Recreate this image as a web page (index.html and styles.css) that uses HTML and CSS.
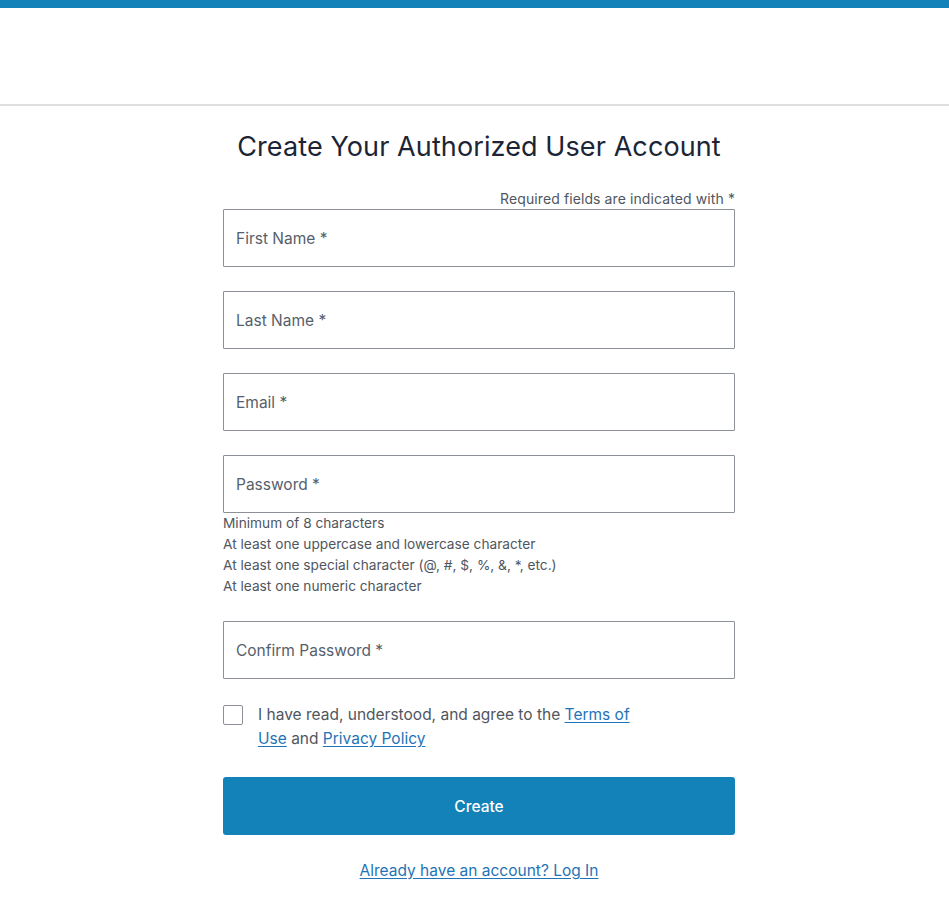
FILE: index.html
```html
<!DOCTYPE html>
<html lang="en">
<head>
<meta charset="utf-8">
<title>Create Your Authorized User Account</title>
<link rel="stylesheet" href="styles.css">
</head>
<body>
<div class="topbar"></div>
<header class="header"></header>
<main class="main">
  <form class="form">
    <h1 class="title">Create Your Authorized User Account</h1>
    <p class="required">Required fields are indicated with *</p>
    <div class="field"><input class="input" type="text" placeholder="First Name *"></div>
    <div class="field"><input class="input" type="text" placeholder="Last Name *"></div>
    <div class="field"><input class="input" type="email" placeholder="Email *"></div>
    <div class="field">
      <input class="input" type="password" placeholder="Password *">
      <ul class="hints">
        <li>Minimum of 8 characters</li>
        <li>At least one uppercase and lowercase character</li>
        <li>At least one special character (@, #, $, %, &amp;, *, etc.)</li>
        <li>At least one numeric character</li>
      </ul>
    </div>
    <div class="field"><input class="input" type="password" placeholder="Confirm Password *"></div>
    <label class="agree">
      <span class="box"></span>
      <span class="agree-text">I have read, understood, and agree to the <a href="#" class="link">Terms of Use</a> and <a href="#" class="link">Privacy Policy</a></span>
    </label>
    <button type="button" class="btn">Create</button>
    <div class="login"><a href="#" class="link">Already have an account? Log In</a></div>
  </form>
</main>
</body>
</html>
```
FILE: styles.css
```css
* { box-sizing: border-box; }
html, body { margin: 0; padding: 0; background: #fff; }
body {
  font-family: Inter, "Open Sans", "Liberation Sans", sans-serif;
  color: #1b2535;
}
.topbar { height: 8px; background: #1282b9; }
.header { height: 98px; border-bottom: 2px solid #e0e0e0; }
.main { display: flex; justify-content: center; padding-left: 9px; }
.form { width: 512px; display: flex; flex-direction: column; }
.title {
  margin: 24px 0 0;
  text-align: center;
  font-weight: 400;
  font-size: 27px;
  line-height: 34px;
  color: #1b2535;
  letter-spacing: 0.1px;
}
.required {
  margin: 26px 0 1px;
  text-align: right;
  font-size: 14px;
  line-height: 18px;
  color: #4f5660;
  letter-spacing: 0.1px;
}
.field { margin-bottom: 24px; }
.input {
  display: block;
  width: 100%;
  height: 58px;
  border: 1px solid #8c9197;
  border-radius: 1px;
  padding: 0 12px;
  font-family: inherit;
  font-size: 15.5px;
  color: #1b2535;
  background: #fff;
  outline: none;
}
.input::placeholder { color: #56606b; opacity: 1; }
.hints {
  list-style: none;
  margin: 0;
  padding: 0;
  font-size: 13.7px;
  line-height: 21px;
  color: #4f5660;
}
.agree {
  display: flex;
  align-items: flex-start;
  gap: 15px;
  font-size: 15.5px;
  line-height: 24px;
  color: #4f5660;
  cursor: pointer;
}
.box {
  flex: none;
  width: 20px;
  height: 20px;
  border: 1px solid #8c9197;
  border-radius: 2px;
  margin-top: 2px;
}
.agree-text { width: 380px; }
.link { color: #1f73b7; text-decoration: underline; text-underline-offset: 2px; }
.btn {
  margin-top: 26px;
  height: 58px;
  width: 100%;
  border: none;
  border-radius: 3px;
  background: #1282b9;
  color: #fff;
  font-family: inherit;
  font-size: 15.5px;
  font-weight: 500;
  cursor: pointer;
}
.login {
  margin-top: 25px;
  text-align: center;
  font-size: 15.5px;
  line-height: 22px;
}
```
